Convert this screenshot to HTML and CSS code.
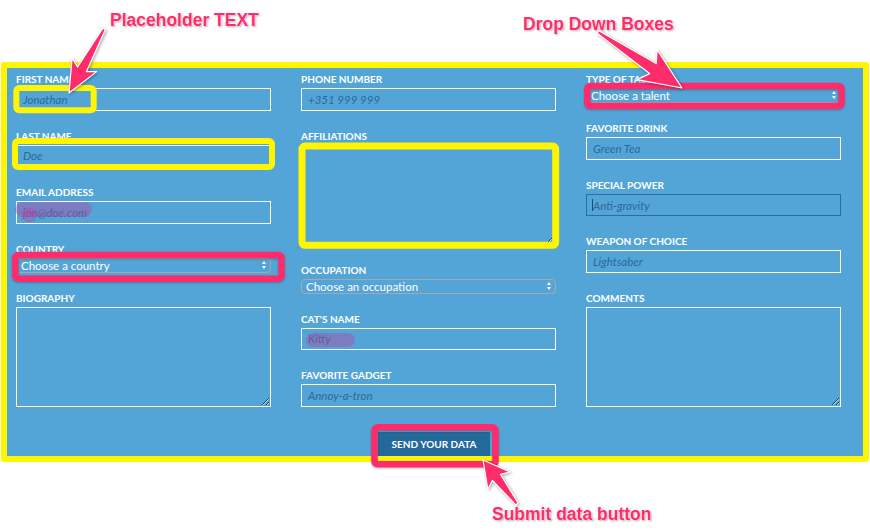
FILE: index.html
```html
<!DOCTYPE html>
<html lang="en">
<head>
<meta charset="utf-8">
<title>Form</title>
<link rel="stylesheet" href="styles.css">
</head>
<body>
<form class="data-form">
  <div class="fields">
    <div class="col">
      <div class="field"><label>First Name</label><input type="text" placeholder="Jonathan"></div>
      <div class="field"><label>Last Name</label><input type="text" placeholder="Doe"></div>
      <div class="field"><label>Email Address</label><input type="text" placeholder="jon@doe.com"></div>
      <div class="field"><label>Country</label><div class="select-wrap"><select><option>Choose a country</option></select></div></div>
      <div class="field"><label>Biography</label><textarea></textarea></div>
    </div>
    <div class="col">
      <div class="field"><label>Phone Number</label><input type="text" placeholder="+351 999 999"></div>
      <div class="field"><label>Affiliations</label><textarea></textarea></div>
      <div class="field"><label>Occupation</label><div class="select-wrap"><select><option>Choose an occupation</option></select></div></div>
      <div class="field"><label>Cat's Name</label><input type="text" placeholder="Kitty"></div>
      <div class="field"><label>Favorite Gadget</label><input type="text" placeholder="Annoy-a-tron"></div>
    </div>
    <div class="col">
      <div class="field"><label>Type of Talent</label><div class="select-wrap"><select><option>Choose a talent</option></select></div></div>
      <div class="field"><label>Favorite Drink</label><input type="text" placeholder="Green Tea"></div>
      <div class="field"><label>Special Power</label><div class="input-wrap"><input class="is-focused" type="text" placeholder="Anti-gravity"><span class="caret"></span></div></div>
      <div class="field"><label>Weapon of Choice</label><input type="text" placeholder="Lightsaber"></div>
      <div class="field"><label>Comments</label><textarea></textarea></div>
    </div>
  </div>
  <div class="actions"><button type="button">Send your data</button></div>
</form>

<div class="annotations">
  <svg class="marks" width="870" height="531" viewBox="0 0 870 531">
    <rect class="blob" x="15" y="202" width="77" height="15" rx="7.5"/>
    <circle class="blob" cx="29" cy="215" r="7.5"/>
    <rect class="blob" x="306" y="333" width="49" height="14" rx="7"/>

    <rect class="box-yellow" x="16.3" y="88" width="77.4" height="22.3" rx="3"/>
    <rect class="box-yellow" x="15" y="141" width="257" height="26" rx="3"/>
    <rect class="box-yellow wide" x="302" y="146" width="253.7" height="99.3" rx="3"/>

    <rect class="box-pink" x="15.3" y="255" width="266.3" height="23.7" rx="3"/>
    <rect class="box-pink" x="587.3" y="86" width="254.3" height="20" rx="3"/>
    <rect class="box-pink" x="374.5" y="427.3" width="121" height="37" rx="3"/>

    <g class="arrows">
      <polygon points="105.3,29.7 86.4,71.7 96.7,71.6 69,93 72.1,58.2 77.6,66.9 102.7,28.3"/>
      <polygon points="597.2,33.2 649.6,73.6 637.1,79.7 682,88 657.1,49.7 656.2,63.6 598.8,30.8"/>
      <polygon points="518.2,503.1 500.4,474.3 510,472 483,460 487.8,489.2 492.4,480.5 515.8,504.9"/>
    </g>
  </svg>
  <div class="note note-placeholder">Placeholder TEXT</div>
  <div class="note note-dropdown">Drop Down Boxes</div>
  <div class="note note-submit">Submit data button</div>
</div>
</body>
</html>
```
FILE: styles.css
```css
* { box-sizing: border-box; }

body {
  margin: 0;
  width: 870px;
  height: 531px;
  overflow: hidden;
  position: relative;
  background: #ffffff;
  font-family: Lato, "Noto Sans", sans-serif;
}

.data-form {
  width: 868px;
  margin: 62px 0 0 1px;
  border: 6px solid #fff500;
  border-radius: 3px;
  background: #54a5d7;
  padding: 5px 0 0 0;
}

.fields {
  display: grid;
  grid-template-columns: repeat(3, 255px);
  column-gap: 30px;
  padding-left: 9px;
}

.col {
  display: flex;
  flex-direction: column;
}

.field {
  display: flex;
  flex-direction: column;
  margin-bottom: 19px;
}

.field label {
  font-size: 10px;
  line-height: 12px;
  font-weight: 700;
  color: #ffffff;
  text-transform: uppercase;
  margin-bottom: 3px;
}

.field input {
  width: 255px;
  height: 22.5px;
  margin: 0;
  border: 1px solid #ffffff;
  background: transparent;
  padding: 0 6px;
  font-family: Lato, "Noto Sans", sans-serif;
  font-size: 11.5px;
  font-style: italic;
  color: #2b6999;
  outline: none;
}

.field input::placeholder {
  color: #2b6999;
  font-style: italic;
  opacity: 1;
}

.field input.is-focused {
  border-color: #2b6ca1;
}

.input-wrap {
  position: relative;
}

.caret {
  position: absolute;
  left: 6px;
  top: 5px;
  width: 1px;
  height: 12px;
  background: #1d4d75;
}

.field textarea {
  width: 255px;
  height: 100px;
  margin: 0;
  border: 1px solid #ffffff;
  background: transparent;
  outline: none;
  display: block;
}

.select-wrap {
  position: relative;
  width: 255px;
}

.select-wrap select {
  -webkit-appearance: none;
  appearance: none;
  display: block;
  width: 255px;
  height: 15px;
  margin: 0;
  padding: 0 4px;
  border: 1px solid #a3a9ae;
  border-radius: 4px;
  background: transparent;
  color: #ffffff;
  font-family: Lato, "Noto Sans", sans-serif;
  font-size: 11.5px;
  line-height: 13px;
  outline: none;
}

.select-wrap::before,
.select-wrap::after {
  content: "";
  position: absolute;
  right: 5px;
  width: 0;
  height: 0;
  border-left: 2.5px solid transparent;
  border-right: 2.5px solid transparent;
}

.select-wrap::before {
  top: 3px;
  border-bottom: 3px solid #ffffff;
}

.select-wrap::after {
  top: 8px;
  border-top: 3px solid #ffffff;
}

.actions {
  display: flex;
  justify-content: center;
  margin-top: 6px;
  padding-right: 2px;
}

.actions button {
  width: 112px;
  height: 24px;
  border: none;
  margin: 0;
  background: #236a9b;
  color: #ffffff;
  font-family: Lato, "Noto Sans", sans-serif;
  font-size: 10px;
  font-weight: 700;
  text-transform: uppercase;
  cursor: pointer;
}

/* annotation layer */
.annotations {
  position: absolute;
  left: 0;
  top: 0;
  width: 870px;
  height: 531px;
  pointer-events: none;
}

.marks {
  position: absolute;
  left: 0;
  top: 0;
}

.blob {
  fill: rgba(180, 70, 160, 0.42);
}

.box-yellow {
  fill: none;
  stroke: #fff500;
  stroke-width: 6;
}

.box-yellow.wide {
  stroke-width: 7;
}

.box-pink {
  fill: none;
  stroke: #fe2c6b;
  stroke-width: 6.5;
  filter: drop-shadow(0 1px 1px rgba(0, 0, 0, 0.25));
}

.arrows polygon {
  fill: #fe2c6b;
  stroke: #ffffff;
  stroke-width: 1.2;
  stroke-linejoin: round;
  filter: drop-shadow(1px 1px 1.5px rgba(0, 0, 0, 0.35));
}

.note {
  position: absolute;
  font-family: "Liberation Sans", Arial, sans-serif;
  font-weight: 700;
  font-size: 17.5px;
  line-height: 20px;
  color: #fe2c6b;
  white-space: nowrap;
  text-shadow: 0 0 1px #ffffff, 0 0 2px #ffffff, 1px 1px 2px rgba(0, 0, 0, 0.4);
}

.note-placeholder { left: 110px; top: 10px; }
.note-dropdown { left: 523px; top: 14px; }
.note-submit { left: 492px; top: 504px; }
```
